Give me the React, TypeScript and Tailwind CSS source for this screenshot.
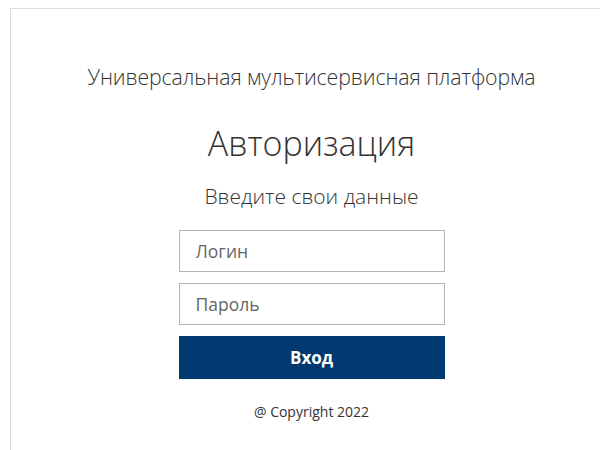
export default function App() {
  return (
    <div className="min-h-[450px] w-[600px] overflow-hidden bg-white pt-2 pl-[10px]">
      <main
        className="flex w-[602px] min-h-[442px] flex-col items-center border-l border-t border-[#dcdcdc] pt-[54px] text-[#333]"
        style={{ fontFamily: '"Open Sans", "Noto Sans", sans-serif' }}
      >
        <p className="text-[21.3px] font-light leading-[28px] tracking-[-0.1px]">
          Универсальная мультисервисная платформа
        </p>
        <h1 className="mt-[30px] text-[34px] font-light leading-[44px]">Авторизация</h1>
        <h2 className="mt-[17px] text-[21px] font-light leading-[28px]">Введите свои данные</h2>

        <form className="mt-[20px] flex w-[266px] flex-col gap-[11px]">
          <input
            type="text"
            placeholder="Логин"
            className="h-[42px] w-full border border-[#b4b4b4] px-[16px] text-[17.5px] placeholder:text-[#666] outline-none"
          />
          <input
            type="password"
            placeholder="Пароль"
            className="h-[42px] w-full border border-[#b4b4b4] px-[16px] text-[17.5px] placeholder:text-[#666] outline-none"
          />
          <button
            type="button"
            className="h-[43px] w-full bg-[#003a70] text-[17px] font-bold text-white"
          >
            Вход
          </button>
        </form>

        <footer className="mt-[23px] text-[14px] leading-[20px] text-[#333]">@ Copyright 2022</footer>
      </main>
    </div>
  );
}
